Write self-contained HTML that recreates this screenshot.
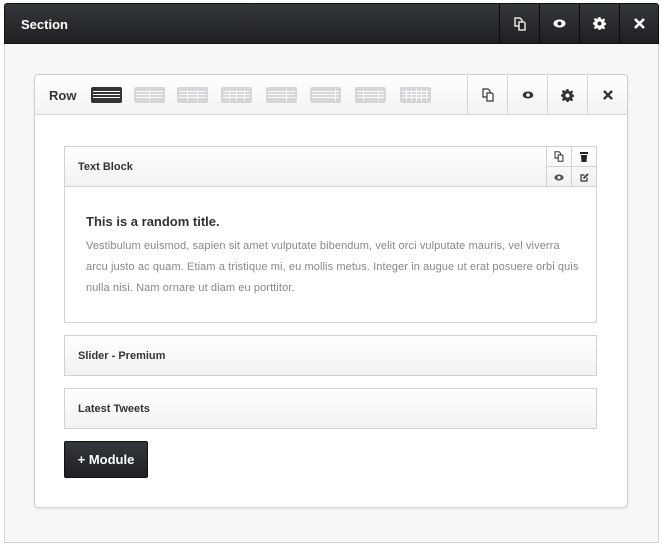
<!DOCTYPE html>
<html><head><meta charset="utf-8"><style>
*{box-sizing:border-box;margin:0;padding:0}
body{width:663px;height:534px;background:#fff;font-family:"Liberation Sans",Arial,sans-serif;position:relative;overflow:hidden}
.abs{position:absolute}
.sec{left:4px;top:3px;width:655px;height:41px;background:linear-gradient(#34373b,#1e2023);border:1px solid #111;border-radius:3px 3px 0 0;color:#fff}
.sec .t{position:absolute;left:16px;top:13px;font-size:13px;font-weight:bold}
.sbtn{position:absolute;top:0;width:40px;height:39px;border-left:1px solid #0c0c0c;display:flex;align-items:center;justify-content:center}
.body{left:4px;top:43px;width:655px;height:500px;background:#f7f7f7;border:1px solid #d4d4d8;border-top:none}
.row{left:34px;top:74px;width:594px;height:434px;background:#fff;border:1px solid #cfcfd6;border-radius:4px;box-shadow:0 1px 2px rgba(0,0,0,.08)}
.rh{position:absolute;left:0;top:0;width:592px;height:40px;background:linear-gradient(#fff,#f3f3f3);border-bottom:1px solid #d4d4dc;border-radius:4px 4px 0 0}
.rh .t{position:absolute;left:14px;top:13px;font-size:13px;font-weight:bold;color:#333}
.rbtn{position:absolute;top:0;width:40px;height:40px;border-left:1px solid #d4d4dc;display:flex;align-items:center;justify-content:center}
.lay{position:absolute;top:12px;width:31px;height:16px;background:#d5d6da;border-radius:2px;padding:2px}
.lay.on{background:#333}
.lay i{display:block;height:1px;background:#fff;margin-top:2px}
.lay b{position:absolute;top:2px;bottom:2px;width:1px;background:#fff}
.mod{position:absolute;left:29px;width:533px;background:linear-gradient(#fff,#f2f2f2);border:1px solid #d0d0d8;font-size:11px;font-weight:bold;color:#333}
.mod span{position:absolute;left:13px;top:14px}
.tb{position:absolute;left:29px;top:71px;width:533px;height:177px;border:1px solid #d0d0d8;background:#fff}
.tbh{position:absolute;left:0;top:0;width:531px;height:40px;background:linear-gradient(#fff,#f2f2f2);border-bottom:1px solid #d0d0d8;font-size:11px;font-weight:bold;color:#333}
.sb{position:absolute;width:25px;height:20px;border-left:1px solid #d0d0d8;display:flex;align-items:center;justify-content:center}
.btn{position:absolute;left:29px;top:366px;width:84px;height:37px;background:linear-gradient(#34373b,#1e2023);border:1px solid #111;border-radius:2px;color:#fff;font-size:13px;font-weight:bold;text-align:center;line-height:35px}
</style></head><body>
<div class="abs body"></div>
<div class="abs sec"><div class="t">Section</div>
<div class="sbtn" style="left:494px"><svg width="12" height="14" viewBox="0 0 12 14" fill="none" stroke="#fff" stroke-width="1.3"><path d="M1 1h5l2 2v6H1z"/><path d="M5 5h5l1 1v7H5z" fill="#222"/></svg></div>
<div class="sbtn" style="left:534px"><svg width="13" height="9" viewBox="0 0 13 9"><ellipse cx="6.5" cy="4.5" rx="6" ry="4" fill="#fff"/><circle cx="6.5" cy="4.5" r="2" fill="#222"/></svg></div>
<div class="sbtn" style="left:574px"><svg width="13" height="13" viewBox="0 0 14 14"><path fill="#fff" d="M6 0h2l.4 2 1.6.7 1.7-1.2 1.4 1.4L11.9 4.6 12.6 6 14 6.3v2l-1.4.3-.7 1.6 1.2 1.7-1.4 1.4-1.7-1.2-1.6.7L8 14H6l-.4-1.5-1.6-.7-1.7 1.2-1.4-1.4L2.1 9.9 1.4 8.3 0 8V6l1.4-.3.7-1.6L.9 2.4 2.3 1l1.7 1.2L5.6 1.5z"/><circle cx="7" cy="7" r="2.2" fill="#222"/></svg></div>
<div class="sbtn" style="left:614px"><svg width="11" height="11" viewBox="0 0 11 11" stroke="#fff" stroke-width="2.6"><path d="M1 1l9 9M10 1l-9 9"/></svg></div>
</div>
<div class="abs row">
<div class="rh"><div class="t">Row</div>
<div class="lay on" style="left:56px"><i></i><i></i><i></i></div>
<div class="lay" style="left:99px"><i></i><i></i><i></i><b style="left:15px"></b></div>
<div class="lay" style="left:142px"><i></i><i></i><i></i><b style="left:10px"></b><b style="left:20px"></b></div>
<div class="lay" style="left:186px"><i></i><i></i><i></i><b style="left:8px"></b><b style="left:15px"></b><b style="left:23px"></b></div>
<div class="lay" style="left:231px"><i></i><i></i><i></i><b style="left:20px"></b></div>
<div class="lay" style="left:275px"><i></i><i></i><i></i><b style="left:25px"></b></div>
<div class="lay" style="left:320px"><i></i><i></i><i></i><b style="left:8px"></b><b style="left:23px"></b></div>
<div class="lay" style="left:365px"><i></i><i></i><i></i><b style="left:6px"></b><b style="left:11px"></b><b style="left:16px"></b><b style="left:21px"></b><b style="left:26px"></b></div>
<div class="rbtn" style="left:432px"><svg width="12" height="14" viewBox="0 0 12 14" fill="none" stroke="#333" stroke-width="1.2"><path d="M1 1h5l2 2v6H1z"/><path d="M5 5h5l1 1v7H5z" fill="#fff"/></svg></div>
<div class="rbtn" style="left:472px"><svg width="12" height="8" viewBox="0 0 13 9"><ellipse cx="6.5" cy="4.5" rx="6" ry="4" fill="#333"/><circle cx="6.5" cy="4.5" r="2" fill="#fff"/></svg></div>
<div class="rbtn" style="left:512px"><svg width="13" height="13" viewBox="0 0 14 14"><path fill="#333" d="M6 0h2l.4 2 1.6.7 1.7-1.2 1.4 1.4L11.9 4.6 12.6 6 14 6.3v2l-1.4.3-.7 1.6 1.2 1.7-1.4 1.4-1.7-1.2-1.6.7L8 14H6l-.4-1.5-1.6-.7-1.7 1.2-1.4-1.4L2.1 9.9 1.4 8.3 0 8V6l1.4-.3.7-1.6L.9 2.4 2.3 1l1.7 1.2L5.6 1.5z"/><circle cx="7" cy="7" r="2.2" fill="#fff"/></svg></div>
<div class="rbtn" style="left:552px"><svg width="10" height="10" viewBox="0 0 11 11" stroke="#333" stroke-width="2.6"><path d="M1 1l9 9M10 1l-9 9"/></svg></div>
</div>
<div class="tb">
<div class="tbh"><span style="position:absolute;left:13px;top:14px">Text Block</span>
<div class="sb" style="left:481px;top:0;border-bottom:1px solid #d0d0d8"><svg width="10" height="11" viewBox="0 0 12 14" fill="none" stroke="#333" stroke-width="1.3"><path d="M1 1h5l2 2v6H1z"/><path d="M5 5h5l1 1v7H5z" fill="#fff"/></svg></div>
<div class="sb" style="left:506px;top:0;border-bottom:1px solid #d0d0d8"><svg width="8" height="10" viewBox="0 0 8 10"><rect x="0" y="0" width="8" height="2" fill="#222"/><path d="M1 3h6l-.5 7h-5z" fill="#222"/></svg></div>
<div class="sb" style="left:481px;top:20px"><svg width="10" height="7" viewBox="0 0 13 9"><ellipse cx="6.5" cy="4.5" rx="6" ry="4" fill="#555"/><circle cx="6.5" cy="4.5" r="2" fill="#fff"/></svg></div>
<div class="sb" style="left:506px;top:20px"><svg width="9" height="9" viewBox="0 0 9 9" fill="none" stroke="#333" stroke-width="1.2"><path d="M7 4.5V8H1V2h3.5"/><path d="M3.5 5.5L8 1" stroke-width="1.6"/></svg></div>
</div>
<div style="position:absolute;left:21px;top:67px;font-size:13px;font-weight:bold;color:#333">This is a random title.</div>
<div style="position:absolute;left:21px;top:89px;width:494px;font-size:11px;line-height:21px;color:#888;letter-spacing:0.1px">Vestibulum euismod, sapien sit amet vulputate bibendum, velit orci vulputate mauris, vel viverra arcu justo ac quam. Etiam a tristique mi, eu mollis metus. Integer in augue ut erat posuere orbi quis nulla nisi. Nam ornare ut diam eu porttitor.</div>
</div>
<div class="mod" style="top:260px;height:41px"><span>Slider - Premium</span></div>
<div class="mod" style="top:313px;height:41px"><span>Latest Tweets</span></div>
<div class="btn">+ Module</div>
</div>
</body></html>
